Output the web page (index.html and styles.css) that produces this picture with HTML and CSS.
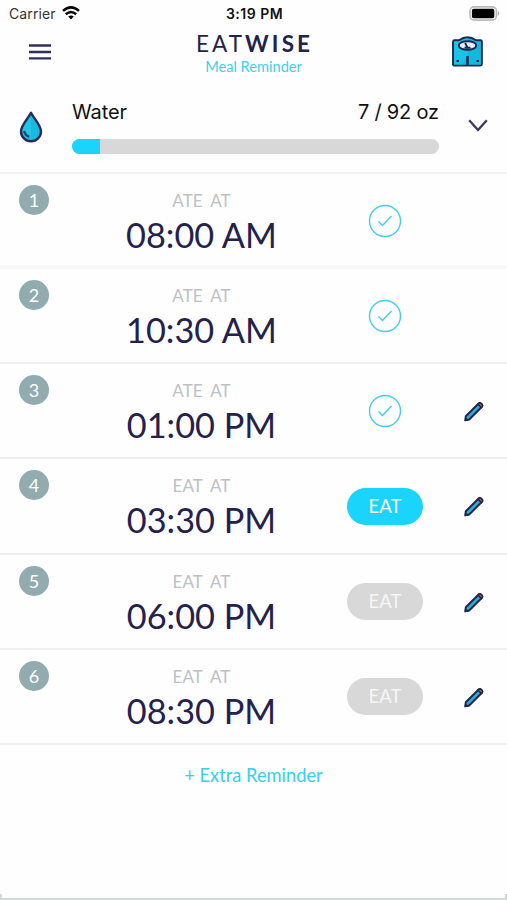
FILE: index.html
```html
<!DOCTYPE html>
<html lang="en">
<head>
<meta charset="utf-8">
<title>EatWise Meal Reminder</title>
<link rel="stylesheet" href="styles.css">
</head>
<body>
<svg class="defs" width="0" height="0" aria-hidden="true">
  <symbol id="check" viewBox="0 0 34 34"><circle cx="17" cy="17" r="15.5"/><path d="M10.5 17.500l4 4 9-9.500"/></symbol>
  <symbol id="pencil" viewBox="0 0 22 22"><path d="M2.300 19.300l.5-4L15.600 2.500q1.200-1.100 2.300 0l1 1q1.100 1.100 0 2.300L6.200 18.500z" fill="#27aedb" stroke="#252447" stroke-width="2" stroke-linejoin="round"/><path d="M15 3.100l.7-.6q1.200-1.100 2.300 0l1 1q1.100 1.100 0 2.300l-.7.700z" fill="#8b7d95" stroke="#252447" stroke-width="1.600"/><path d="M1.500 20.200l.7-4 3.500 3.300z" fill="#252447"/></symbol>
</svg>
<main class="app">
  <div class="status">
    <div class="carrier"><span>Carrier</span>
      <svg width="18" height="14" viewBox="0 0 18 14" fill="none" stroke="#050505" stroke-width="2.500"><path d="M1 4.900q8-7 16 0M3.800 8.200q5.200-4.400 10.400 0"/><path d="M6.200 10.600q2.800-2.300 5.600 0L9 13.500z" fill="#050505" stroke="none"/></svg>
    </div>
    <div class="clock">3:19 PM</div>
    <svg class="battery" width="31" height="15" viewBox="0 0 31 15"><rect x="1" y=".9" width="26.400" height="13.200" rx="4" fill="#fff" stroke="#bbb" stroke-width="1.600"/><rect x="2.900" y="2.800" width="22.400" height="9.400" rx="2" fill="#000"/><path d="M28.800 5q2.500 2.500 0 5z" fill="#aaa"/></svg>
  </div>
  <header class="header">
    <svg width="22" height="16" viewBox="0 0 22 16" stroke="#302f5e" stroke-width="2.300"><path d="M0 1.500h22M0 8h22M0 14.300h22"/></svg>
    <div class="brand"><h1>EAT<b>WISE</b></h1><p>Meal Reminder</p></div>
    <svg class="scale" width="31" height="31" viewBox="0 0 31 31" stroke="#20284f" stroke-width="1.900" stroke-linejoin="round"><path d="M2.500 4.200h4.500Q15.500-1.800 24 4.200h4.500q1.400 0 1.400 1.400v22.500q0 1.500-1.500 1.500H2.500Q1 29.600 1 28.100V5.700q0-1.500 1.500-1.500z" fill="#14b8df"/><path d="M2 5.200h6l7.500-3.500v17L10 28.500H2z" fill="#21cff2" stroke="none" opacity=".45"/><ellipse cx="15.500" cy="9.500" rx="8.700" ry="4.300" fill="#e8eef5"/><path d="M15.500 11.500l-2.400-4.500M12.500 11.800h6" fill="none"/><path d="M15.500 20v9" stroke-width="2.500"/><path d="M4.500 25h2.500M24.500 25H27" stroke-width="2.200"/></svg>
  </header>
  <section class="water">
    <svg class="drop" width="24" height="32" viewBox="0 0 24 32"><path d="M12 1.800C9.300 7.300 2 14 2 20.400a10 9.800 0 0 0 20 0C22 14 14.700 7.300 12 1.800z" fill="#19badf" stroke="#292a55" stroke-width="2.400" stroke-linejoin="round"/><path d="M12 5C9 11 3.500 15.500 3.500 20.500Q5 26.500 12 28.500z" fill="#25cdef" opacity=".6"/><path d="M5 20q1 4 5.200 6" fill="none" stroke="#244165" stroke-width="2.200"/></svg>
    <div class="intake">
      <div class="labels"><span>Water</span><span class="amount">7 / 92 oz</span></div>
      <div class="track"><div class="fill"></div></div>
    </div>
    <svg class="chevron" width="20" height="13" viewBox="0 0 20 13" fill="none" stroke="#3b3b61" stroke-width="2.300"><path d="M1.200 1.200L10 11l8.800-9.800"/></svg>
  </section>
  <section class="meals">
    <article class="meal"><span class="number">1</span><div class="when"><span class="label">ATE AT</span><time>08:00 AM</time></div><svg class="check"><use href="#check"/></svg></article>
    <article class="meal"><span class="number">2</span><div class="when"><span class="label">ATE AT</span><time>10:30 AM</time></div><svg class="check"><use href="#check"/></svg></article>
    <article class="meal"><span class="number">3</span><div class="when"><span class="label">ATE AT</span><time>01:00 PM</time></div><svg class="check"><use href="#check"/></svg><svg class="pencil"><use href="#pencil"/></svg></article>
    <article class="meal"><span class="number">4</span><div class="when"><span class="label">EAT AT</span><time>03:30 PM</time></div><button class="eat active">EAT</button><svg class="pencil"><use href="#pencil"/></svg></article>
    <article class="meal"><span class="number">5</span><div class="when"><span class="label">EAT AT</span><time>06:00 PM</time></div><button class="eat">EAT</button><svg class="pencil"><use href="#pencil"/></svg></article>
    <article class="meal"><span class="number">6</span><div class="when"><span class="label">EAT AT</span><time>08:30 PM</time></div><button class="eat">EAT</button><svg class="pencil"><use href="#pencil"/></svg></article>
  </section>
  <button class="extra">+ Extra Reminder</button>
  <div class="bottom"></div>
</main>
</body>
</html>
```
FILE: styles.css
```css
* { box-sizing: border-box; }
body { margin: 0; background: #fefefe; font-family: Lato, sans-serif; color: #24224d; overflow: hidden; }
button { border: 0; padding: 0; font-family: inherit; }
svg { display: block; }
.defs { position: absolute; }
.app { width: 507px; height: 900px; display: flex; flex-direction: column; }
.status { height: 28px; display: grid; grid-template-columns: 1fr auto 1fr; align-items: center; padding: 0 7px 0 9px; font-family: Inter, sans-serif; color: #111; }
.carrier { display: flex; align-items: center; gap: 6px; margin-top: -2px; font-size: 14px; letter-spacing: .1px; color: #333; }
.clock { margin-top: -1px; font-size: 14px; font-weight: 600; letter-spacing: .5px; }
.battery { justify-self: end; margin-top: -2px; }
.header { height: 52px; display: grid; grid-template-columns: 1fr auto 1fr; align-items: start; padding: 0 24px 0 29px; }
.header > svg { margin-top: 16px; }
.header > .scale { justify-self: end; margin-top: 8px; }
.brand { margin-left: -6px; text-align: center; }
h1 { margin: 4px -3px 0 0; font-size: 22.500px; line-height: 24px; font-weight: 400; letter-spacing: 3.100px; }
h1 b { font-weight: 700; }
.brand p { margin: 1px 0 0 1px; font-size: 14.6px; line-height: 19px; color: #42cff2; }
.water { height: 94px; display: grid; grid-template-columns: 72px 367px 1fr; border-bottom: 2px solid #f3f3f3; }
.drop { margin: 31px 0 0 19px; }
.intake { padding-top: 18px; }
.labels { display: flex; justify-content: space-between; font-family: Inter, sans-serif; font-size: 20px; line-height: 28px; letter-spacing: -.1px; color: #111; }
.amount { word-spacing: -.3px; }
.track { height: 15px; margin-top: 13px; border-radius: 8px; background: #d8d8d8; overflow: hidden; }
.fill { width: 28px; height: 100%; background: #1bd4fb; }
.chevron { margin: 39px 0 0 29px; }
.meals { height: 571px; display: grid; grid-template-rows: repeat(6, 1fr); }
.meal { display: grid; grid-template-columns: 97px 209px 157px 1fr; border-bottom: 2px solid #f0f0f0; }
.meal:first-child { border-bottom: 4px solid #f8f8f8; }
.number { width: 30px; height: 30px; margin: 11px 0 0 19px; border-radius: 50%; background: #92abaf; color: #fff; text-align: center; font-size: 18px; line-height: 30px; }
.when { text-align: center; }
.label { display: block; margin-top: 16px; font-size: 17px; line-height: 22px; word-spacing: 4px; color: #bdc1c6; }
time { display: block; font-size: 34.300px; line-height: 45px; white-space: nowrap; }
.check { width: 34px; height: 34px; margin: 30px 0 0 61.500px; fill: none; stroke: #42cdec; stroke-width: 1.4; }
.pencil { width: 22px; height: 22px; margin-top: 37px; }
.eat { width: 76px; height: 37px; margin: 28.500px 0 0 41px; border-radius: 19px; background: #d8d8d8; color: #f6f6f6; font-size: 18.500px; line-height: 37px; }
.eat.active { background: #1bd4fb; }
.extra { align-self: center; margin-top: 18px; background: none; color: #3bcdec; font-size: 18.300px; line-height: 24px; }
.bottom { height: 6px; margin-top: auto; border: solid #d2d7da; border-width: 0 2px 2px; }
```
